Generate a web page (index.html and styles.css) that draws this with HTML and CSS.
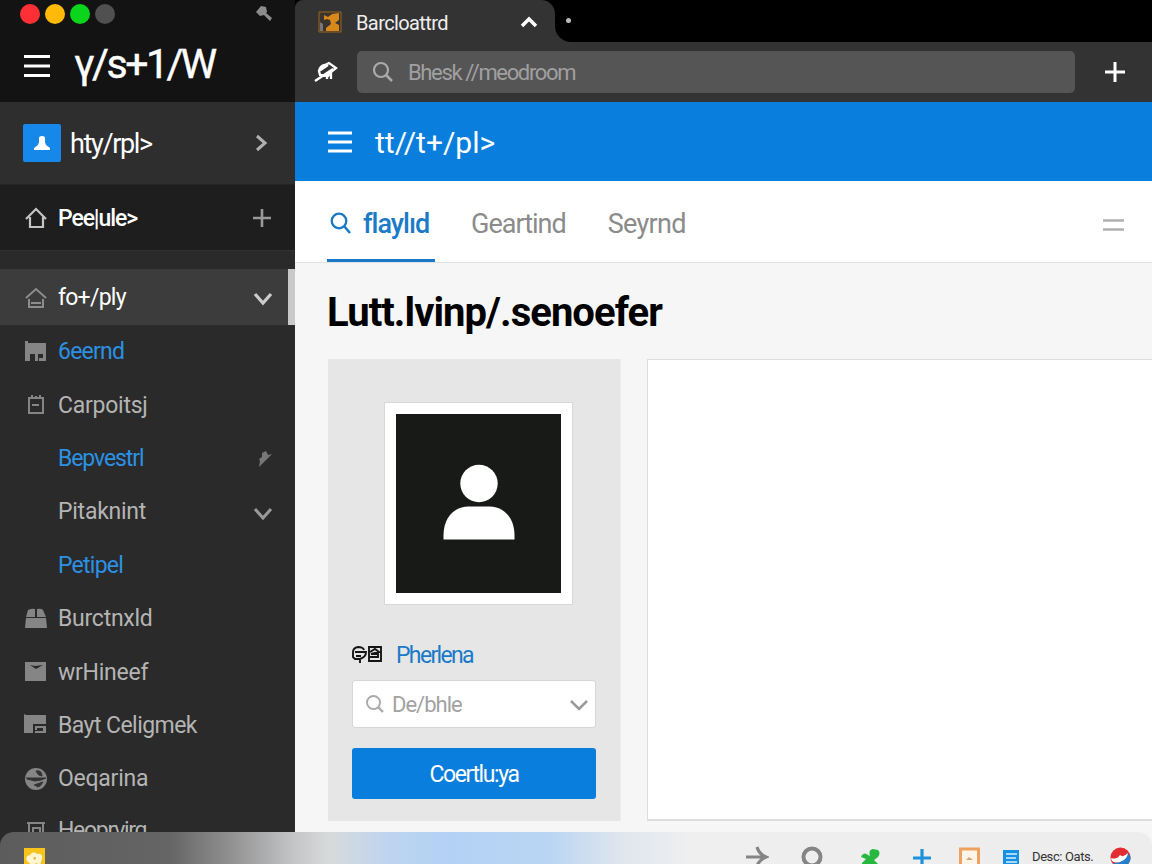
FILE: index.html
```html
<!DOCTYPE html>
<html lang="en">
<head>
    <meta charset="UTF-8">
    <meta name="viewport" content="width=device-width, initial-scale=1.0">
    <title>Lutt.lvinp/.senoefer</title>
    <link rel="stylesheet" href="styles.css">
</head>
<body>
    <div class="app">
        <aside class="sidebar">
            <div class="side-top">
                <div class="lights">
                    <span class="light red"></span>
                    <span class="light yellow"></span>
                    <span class="light green"></span>
                    <span class="light gray"></span>
                    <svg class="hammer" width="18" height="18" viewBox="0 0 18 18"><path d="M1 7 6 1l5 1 1 5-1 1 6 5-2 3-6-6-4 1z" fill="#8c8c8c"/></svg>
                </div>
                <div class="logo-row">
                    <svg width="28" height="24" viewBox="0 0 28 24"><path d="M1 2.500h26M1 12h26M1 21.500h26" stroke="#fff" stroke-width="3"/></svg>
                    <span class="logo">γ/s+1/W</span>
                </div>
            </div>

            <div class="account">
                <span class="account-icon">
                    <svg width="18" height="16" viewBox="0 0 18 16"><path d="M6 3q0-2 3-2t3 2v4l1 3 4 3v2H1v-2l4-3 1-3z" fill="#fff"/></svg>
                </span>
                <span class="account-name">hty/rpl&gt;</span>
                <svg class="row-end" width="20" height="20" viewBox="0 0 20 20"><path d="m6 3 8 7-8 7" fill="none" stroke="#b0b0b0" stroke-width="3"/></svg>
            </div>

            <div class="home-row">
                <svg class="nav-icon" width="24" height="24" viewBox="0 0 24 24"><path d="M2 13 12 3l10 10M6 11v10h13V11M10 21h5" fill="none" stroke="#c4c4c4" stroke-width="2.200"/></svg>
                <span class="home-name">Pee|ule&gt;</span>
                <svg class="row-end" width="20" height="20" viewBox="0 0 20 20"><path d="M10 1v18M1 10h18" stroke="#999" stroke-width="2.600"/></svg>
            </div>

            <nav class="nav">
                <div class="nav-item active">
                    <svg class="nav-icon" width="24" height="24" viewBox="0 0 24 24"><path d="m2 12 10-9 10 9M5 13v8h14v-8M7 17h10" fill="none" stroke="#8c8c8c" stroke-width="2"/></svg>
                    <span class="nav-text tight">fo+/ply</span>
                    <svg class="row-end" width="20" height="20" viewBox="0 0 20 20"><path d="m2 6 8 9 8-9" fill="none" stroke="#ccc" stroke-width="3.200"/></svg>
                </div>
                <div class="nav-item link">
                    <svg class="nav-icon" width="24" height="24" viewBox="0 0 24 24"><path d="M1 1h3v2h18v18h-7v-3h4v-4h-5v7h-3v-7H6v7H1z" fill="#858585"/></svg>
                    <span class="nav-text tight">6eernd</span>
                </div>
                <div class="nav-item">
                    <svg class="nav-icon" width="24" height="24" viewBox="0 0 24 24"><path d="M5 5h14v15H5zM8 2v3M12 3v2M16 2v3M8 12h7" fill="none" stroke="#858585" stroke-width="2"/></svg>
                    <span class="nav-text">Carpoitsj</span>
                </div>
                <div class="nav-item link">
                    <span class="nav-icon"></span>
                    <span class="nav-text tighter">Bepvestrl</span>
                    <svg class="row-end" width="20" height="20" viewBox="0 0 20 20"><path d="m9 5 4-2 2 4 4-1-7 7-6 6 1-6-1-2 3-2z" fill="#777"/></svg>
                </div>
                <div class="nav-item">
                    <span class="nav-icon"></span>
                    <span class="nav-text">Pitaknint</span>
                    <svg class="row-end" width="20" height="20" viewBox="0 0 20 20"><path d="m2 7 8 9 8-9" fill="none" stroke="#999" stroke-width="3"/></svg>
                </div>
                <div class="nav-item link">
                    <span class="nav-icon"></span>
                    <span class="nav-text tight">Petipel</span>
                </div>
                <div class="nav-item">
                    <svg class="nav-icon" width="24" height="24" viewBox="0 0 24 24"><path d="M4 3q4-2 7-1v8H2zM13 2q4-1 6 1l3 7h-9zM2 11h20l1 10H1z" fill="#858585"/></svg>
                    <span class="nav-text">Burctnxld</span>
                </div>
                <div class="nav-item">
                    <svg class="nav-icon" width="24" height="24" viewBox="0 0 24 24"><path d="M1 2h21v19H1z" fill="#858585"/><path d="m6 5 5 1 8-1-7 4z" fill="#292929"/></svg>
                    <span class="nav-text">wrHineef</span>
                </div>
                <div class="nav-item">
                    <svg class="nav-icon" width="24" height="24" viewBox="0 0 24 24"><path d="M0 1l2 1h20v9H9v9H0zM11 13h11v7H11v-2h8v-3h-6v2h-2z" fill="#858585"/></svg>
                    <span class="nav-text snug">Bayt Celigmek</span>
                </div>
                <div class="nav-item">
                    <svg class="nav-icon" width="24" height="24" viewBox="0 0 24 24"><circle cx="12" cy="12" r="11" fill="#858585"/><path d="M12 4q6-1 6 5-4 0-6-5M2 11h20l-5 2-6 1-8-2M10 18l9-3-3 4-3 1" fill="#333" stroke="#333"/></svg>
                    <span class="nav-text">Oeqarina</span>
                </div>
                <div class="nav-item last">
                    <svg class="nav-icon" width="24" height="24" viewBox="0 0 24 24"><path d="M5 4h14v18H5zM3 4h18M9 9h7v10H9z" fill="none" stroke="#858585" stroke-width="2"/></svg>
                    <span class="nav-text cramped">Heoprvirg</span>
                </div>
            </nav>
        </aside>

        <main class="main">
            <div class="tab-strip">
                <div class="browser-tab">
                    <svg width="24" height="22" viewBox="0 0 24 22"><path d="M1 1h22v20H1z" fill="#39342d" stroke="#9a681f"/><path d="M6 4l4 2 4-3 7-1v7l-4 3 4 2v6H8v-3l5-4-1-4-3-1-3 1z" fill="#d9891a"/><path d="M2 11l3 2v7H2z" fill="#777"/></svg>
                    <span class="browser-tab-name">Barcloattrd</span>
                    <svg class="tab-caret" width="18" height="14" viewBox="0 0 18 14"><path d="m2 11 7-7 7 7" fill="none" stroke="#fff" stroke-width="3.500"/></svg>
                </div>
                <div class="strip-rest"><span class="dot"></span></div>
            </div>

            <div class="toolbar">
                <svg width="24" height="22" viewBox="0 0 24 22"><path d="m1 20 18-12M5 10q1-5 6-6l4-2 7 5-5 4-3 4-8-1-1-4 9-6M13 13v5M17 11v7" fill="none" stroke="#fff" stroke-width="2.300"/></svg>
                <div class="address">
                    <svg width="22" height="22" viewBox="0 0 22 22"><circle cx="9" cy="9" r="7" fill="none" stroke="#aaa" stroke-width="2.200"/><path d="m14 14 6 6" stroke="#aaa" stroke-width="2.500"/></svg>
                    <span class="address-text">Bhesk //meodroom</span>
                </div>
                <svg class="new-tab" width="22" height="22" viewBox="0 0 22 22"><path d="M11 1v20M1 11h20" stroke="#fff" stroke-width="3"/></svg>
            </div>

            <header class="app-bar">
                <svg width="24" height="22" viewBox="0 0 24 22"><path d="M0 2h24M0 11h24M0 20h24" stroke="#fff" stroke-width="2.800"/></svg>
                <span class="app-bar-title">tt//t+/pl&gt;</span>
            </header>

            <div class="tabs">
                <div class="tab selected">
                    <svg width="22" height="22" viewBox="0 0 22 22"><circle cx="9" cy="9" r="7.300" fill="none" stroke="#1a7ac8" stroke-width="2.300"/><path d="m14 14 6 7" stroke="#1a7ac8" stroke-width="2.600"/></svg>
                    <span class="tab-first">flaylıd</span>
                </div>
                <div class="tab tab-second">Geartind</div>
                <div class="tab tab-third">Seyrnd</div>
                <svg class="tabs-menu" width="21" height="14" viewBox="0 0 21 14"><path d="M0 2.500h21M0 11.500h21" stroke="#b0b0b0" stroke-width="2.600"/></svg>
            </div>

            <section class="content">
                <h1>Lutt.lvinp/.senoefer</h1>
                <div class="panels">
                    <div class="profile">
                        <div class="avatar">
                            <svg width="165" height="179" viewBox="0 0 165 179"><circle cx="83" cy="69.500" r="18.700" fill="#fff"/><path d="M47.500 125.500v-4c0-17 10-29 25-29h21c15 0 25 12 25 29v4z" fill="#fff"/></svg>
                        </div>
                        <div class="profile-name">
                            <svg width="31" height="20" viewBox="0 0 31 20"><path d="M12 5q-1-3-6-3-5 1-5 5v5l2 2h5M3 7h8M4 11h5M9 7h5q0 5-6 7v4M17 2h12v14H17zM18 7l5-3 4 3-8 2h7v3h-8" fill="none" stroke="#151515" stroke-width="1.900"/></svg>
                            <span>Pherlena</span>
                        </div>
                        <div class="select">
                            <svg width="20" height="20" viewBox="0 0 20 20"><circle cx="8.500" cy="8.500" r="6.500" fill="none" stroke="#aaa" stroke-width="2"/><path d="m13 13 5 5" stroke="#aaa" stroke-width="2.400"/></svg>
                            <span class="select-text">De/bhle</span>
                            <svg class="select-arrow" width="20" height="20" viewBox="0 0 20 20"><path d="m2 7 8 8 8-8" fill="none" stroke="#9a9a9a" stroke-width="2.500"/></svg>
                        </div>
                        <button class="btn">Coertlu:ya</button>
                    </div>
                    <div class="blank-panel"></div>
                </div>
            </section>
        </main>

        <footer class="dock">
            <svg class="dock-photo" width="21" height="21" viewBox="0 0 21 21"><path d="M0 0h21v21H0z" fill="#f8c31b"/><path d="M3 13q-2-5 3-6 3-5 7-1 6-1 5 5l-2 6-4-2-3 3z" fill="#fff5d0"/><path d="m9 10 3-1-1 3" fill="#d8a51b"/></svg>
            <svg class="dock-arrow" width="24" height="22" viewBox="0 0 24 22"><path d="M1 11h20M12 1q2 7 9 10-7 3-9 9" fill="none" stroke="#858585" stroke-width="3.200"/></svg>
            <svg class="dock-ring" width="22" height="24" viewBox="0 0 22 24"><circle cx="11" cy="11" r="8.500" fill="none" stroke="#858585" stroke-width="4"/></svg>
            <svg class="dock-puzzle" width="20" height="20" viewBox="0 0 20 20"><path d="M2 6q3-3 6 0l2 1q-2-6 3-7l5 1q3 3 0 7l-4 3 4 4-2 5H9l-1-3-2 3H1l1-6 4-4-5-2z" fill="#28b83f"/></svg>
            <svg class="dock-plus" width="18" height="18" viewBox="0 0 18 18"><path d="M9 0v18M0 9h18" stroke="#1e91dc" stroke-width="3.200"/></svg>
            <svg class="dock-frame" width="21" height="20" viewBox="0 0 21 20"><path d="M1.500 2v17h18V2z" fill="#fff4e8" stroke="#eda35f" stroke-width="3"/><path d="m7 13 3-3 4 3z" fill="#d1a47c"/></svg>
            <svg class="dock-doc" width="16" height="18" viewBox="0 0 16 18"><path d="M0 0h16v18H0z" fill="#1591e3"/><path d="M3 4h11M3 8h10M3 12h11" stroke="#d7efff" stroke-width="1.500"/></svg>
            <span class="dock-text">Desc: Oats.</span>
            <svg class="dock-ball" width="21" height="21" viewBox="0 0 21 21"><circle cx="10.500" cy="10.500" r="10" fill="#e22d32"/><path d="M3 16q9 1 14-10 5 3 3 8-3 7-10 7-5-1-7-5" fill="#257dcc"/><path d="M1 11q6 2 9-3 3 3 8-2-1 6-6 8-6 3-10 0z" fill="#fff"/></svg>
        </footer>
    </div>
</body>
</html>
```
FILE: styles.css
```css
* {
    margin: 0;
    padding: 0;
    box-sizing: border-box;
}

body {
    font-family: Roboto, 'Liberation Sans', sans-serif;
    background: #f6f6f6;
    overflow: hidden;
}

svg {
    display: block;
    flex-shrink: 0;
}

.app {
    position: relative;
    display: flex;
    width: 1152px;
    height: 864px;
    overflow: hidden;
    white-space: nowrap;
}

/* sidebar */
.sidebar {
    width: 295px;
    flex-shrink: 0;
    background: #292a29;
    overflow: hidden;
}

.side-top {
    height: 102px;
    padding: 4px 22px 0 20px;
    background: #121312;
}

.lights {
    display: flex;
    align-items: center;
    gap: 5px;
    height: 20px;
}

.light {
    width: 20px;
    height: 20px;
    border-radius: 50%;
}

.red { background: #ff3035; }
.yellow { background: #ffba08; }
.green { background: #0bd41c; }
.gray { background: #505050; }

.hammer {
    margin-left: auto;
}

.logo-row {
    display: flex;
    align-items: center;
    height: 84px;
    padding-left: 3px;
}

.logo {
    margin: -4px 0 0 23px;
    color: #fff;
    font-size: 41px;
    letter-spacing: -2.5px;
    -webkit-text-stroke: 0.4px #fff;
}

.account {
    display: flex;
    align-items: center;
    height: 83px;
    padding: 0 24px 0 23px;
    background: #2e2e2e;
    border-bottom: 1px solid #252525;
}

.account-icon {
    display: flex;
    align-items: center;
    justify-content: center;
    width: 38px;
    height: 38px;
    border-radius: 2px;
    background: #1588ea;
}

.account-name {
    margin: 2px 0 0 9px;
    color: #fff;
    font-size: 27px;
    letter-spacing: -1.35px;
}

.row-end {
    margin-left: auto;
}

.home-row {
    display: flex;
    align-items: center;
    height: 66px;
    padding: 1px 23px 0 24px;
    background: #1d1e1d;
    border-bottom: 1px solid #303130;
}

.home-name {
    margin-left: 10px;
    color: #fff;
    font-size: 23px;
    font-weight: 500;
    letter-spacing: -1.1px;
}

.nav {
    padding-top: 18px;
}

.nav-item {
    display: flex;
    align-items: center;
    height: 53.4px;
    padding: 0 22px 0 24px;
    color: #b4b4b4;
    font-size: 23px;
    letter-spacing: -0.25px;
}

.nav-item.active {
    height: 56px;
    padding: 1px 15px 0 24px;
    border-right: 7px solid #c9c9c9;
    background: #3b3c3b;
    color: #fff;
}

.nav-item.link {
    color: #2c91e2;
}

.nav-item.last {
    height: 50px;
}

.nav-icon {
    width: 24px;
    flex-shrink: 0;
}

.nav-text {
    margin-left: 10px;
}

.snug { letter-spacing: -0.55px; }
.tight { letter-spacing: -0.75px; }
.tighter { letter-spacing: -1.1px; }
.cramped { letter-spacing: -1.3px; }

/* browser chrome */
.main {
    display: flex;
    flex-direction: column;
    flex: 1;
    min-width: 0;
}

.tab-strip {
    display: flex;
    height: 42px;
    background: linear-gradient(#000 20px, #333 20px);
}

.browser-tab {
    display: flex;
    align-items: center;
    width: 260px;
    padding: 2px 17px 0 23px;
    background: #333;
    border-radius: 8px 14px 0 0;
}

.browser-tab-name {
    margin: 1px 0 0 14px;
    color: #eee;
    font-size: 20px;
    letter-spacing: -0.6px;
}

.tab-caret {
    margin-left: auto;
}

.strip-rest {
    flex: 1;
    background: #000;
    border-bottom-left-radius: 16px;
}

.dot {
    display: block;
    width: 5px;
    height: 5px;
    margin: 18px 0 0 11px;
    border-radius: 50%;
    background: #bbb;
}

.toolbar {
    display: flex;
    align-items: center;
    height: 60px;
    padding: 0 26px 0 19px;
    background: #333;
}

.address {
    display: flex;
    align-items: center;
    width: 718px;
    height: 42px;
    margin-left: 19px;
    padding-left: 15px;
    border-radius: 5px;
    background: #555;
}

.address-text {
    margin-left: 14px;
    color: #a0a0a0;
    font-size: 22px;
    letter-spacing: -1.35px;
}

.new-tab {
    margin-left: auto;
}

/* app header */
.app-bar {
    display: flex;
    align-items: center;
    height: 79px;
    padding: 1px 0 0 33px;
    background: #0a7edc;
}

.app-bar-title {
    margin: 1px 0 0 23px;
    color: #fff;
    font-size: 30px;
}

.tabs {
    display: flex;
    height: 82px;
    padding: 0 28px 0 32px;
    background: #fff;
    border-bottom: 1px solid #e1e1e1;
}

.tab {
    display: flex;
    align-items: center;
    padding-top: 5px;
    color: #8b8b8b;
    font-size: 27px;
}

.tab.selected {
    width: 108px;
    padding-left: 3px;
    border-bottom: 3px solid #1a7ac8;
    color: #1a7ac8;
}

.tab-first {
    margin: 2px 0 0 11px;
    font-weight: 500;
    letter-spacing: -1px;
}

.tab-second {
    margin-left: 36px;
    letter-spacing: -1px;
}

.tab-third {
    margin-left: 42px;
    letter-spacing: -0.7px;
}

.tabs-menu {
    margin: 37px 0 0 auto;
}

/* content */
.content {
    flex: 1;
    padding: 27px 0 0 33px;
    background: #f6f6f6;
}

h1 {
    height: 69px;
    margin-left: -1px;
    color: #000;
    font-size: 40px;
    font-weight: 700;
    line-height: 46px;
    letter-spacing: -0.95px;
}

.panels {
    display: flex;
    gap: 26px;
}

.profile {
    display: flex;
    flex-direction: column;
    width: 293px;
    height: 462px;
    padding: 43px 24px 0;
    background: #e6e6e6;
    border-right: 1px solid #ececec;
}

.avatar {
    width: 189px;
    height: 203px;
    margin-left: 32px;
    padding: 11px;
    background: #fff;
    border: 1px solid #d8d8d8;
}

.avatar svg {
    background: #181a18;
}

.profile-name {
    display: flex;
    align-items: center;
    height: 30px;
    margin-top: 35px;
    color: #1a7ac8;
    font-size: 23px;
}

.profile-name span {
    margin-left: 13px;
    letter-spacing: -1.65px;
}

.select {
    display: flex;
    align-items: center;
    height: 48px;
    margin-top: 10px;
    padding: 0 6px 0 12px;
    background: #fff;
    border: 1px solid #d6d6d6;
    border-radius: 3px;
}

.select-text {
    margin-left: 7px;
    color: #a2a2a2;
    font-size: 22px;
    letter-spacing: -1px;
}

.select-arrow {
    margin-left: auto;
}

.btn {
    height: 51px;
    margin-top: 20px;
    padding-top: 1px;
    border: none;
    border-radius: 3px;
    background: #0a7edc;
    color: #fff;
    font-family: inherit;
    font-size: 23px;
    letter-spacing: -1.4px;
}

.blank-panel {
    flex: 1;
    height: 462px;
    background: #fff;
    border: 1px solid #ddd;
    border-width: 1px 0 2px 1px;
}

/* dock lies over the bottom of both columns */
.dock {
    position: absolute;
    left: 0;
    right: 0;
    bottom: 0;
    display: flex;
    height: 32px;
    padding: 14px 21px 0 24px;
    border-radius: 14px 14px 0 0;
    background: linear-gradient(90deg, #5b5c5b 0, #646564 170px, #909090 230px, #c5c6c8 295px, #d8dadc 330px, #bdd4ef 390px, #b2d2f5 450px, #bad5f3 550px, #dfe6ee 620px, #efefef 690px, #ededed 100%);
    overflow: hidden;
}

.dock-photo { margin-top: 2px; }
.dock-arrow { margin-left: 700px; }
.dock-ring { margin-left: 32px; }
.dock-puzzle { margin: 3px 0 0 37px; }
.dock-plus { margin: 3px 0 0 33px; }
.dock-frame { margin: 1px 0 0 28px; }
.dock-doc { margin: 4px 0 0 23px; }

.dock-text {
    margin: 4px 0 0 13px;
    color: #333;
    font-size: 13px;
    line-height: 14px;
    letter-spacing: -0.4px;
}

.dock-ball { margin: 1px 0 0 auto; }
```
